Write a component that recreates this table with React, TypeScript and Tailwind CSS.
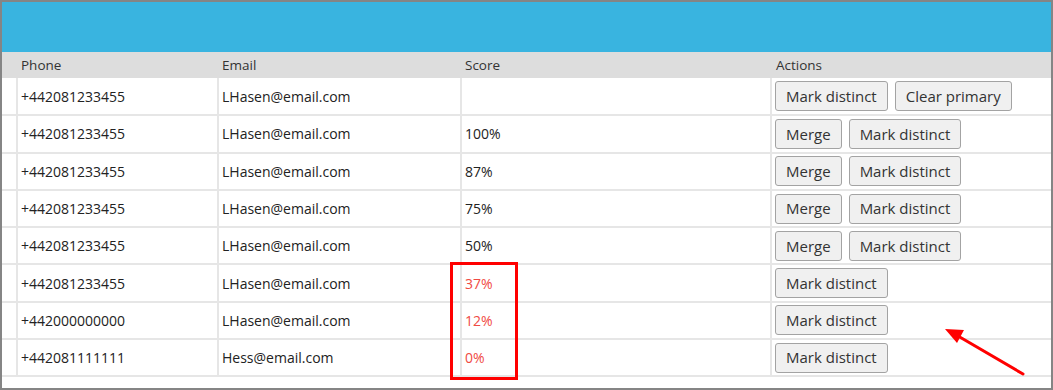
import React from "react";

type Row = { phone: string; email: string; score: string; red?: boolean; actions: string[] };

const rows: Row[] = [
  { phone: "+442081233455", email: "LHasen@email.com", score: "", actions: ["Mark distinct", "Clear primary"] },
  { phone: "+442081233455", email: "LHasen@email.com", score: "100%", actions: ["Merge", "Mark distinct"] },
  { phone: "+442081233455", email: "LHasen@email.com", score: "87%", actions: ["Merge", "Mark distinct"] },
  { phone: "+442081233455", email: "LHasen@email.com", score: "75%", actions: ["Merge", "Mark distinct"] },
  { phone: "+442081233455", email: "LHasen@email.com", score: "50%", actions: ["Merge", "Mark distinct"] },
  { phone: "+442081233455", email: "LHasen@email.com", score: "37%", red: true, actions: ["Mark distinct"] },
  { phone: "+442000000000", email: "LHasen@email.com", score: "12%", red: true, actions: ["Mark distinct"] },
  { phone: "+442081111111", email: "Hess@email.com", score: "0%", red: true, actions: ["Mark distinct"] },
];

export default function App() {
  return (
    <div
      className="relative w-[1053px] h-[390px] bg-white border-2 border-[#858585] overflow-hidden text-[#222]"
      style={{ fontFamily: '"Open Sans", "Noto Sans", sans-serif' }}
    >
      <div className="h-[50px] bg-[#39b4e0]" />
      <table className="w-full table-fixed border-collapse text-[14px]">
        <colgroup>
          <col className="w-[15px]" />
          <col className="w-[201px]" />
          <col className="w-[243px]" />
          <col className="w-[310px]" />
          <col />
        </colgroup>
        <thead>
          <tr className="h-[26px] bg-[#dddddd] text-[#333] text-[13.5px]">
            <th />
            <th className="text-left font-normal pl-[4px]">Phone</th>
            <th className="text-left font-normal pl-[4px]">Email</th>
            <th className="text-left font-normal pl-[4px]">Score</th>
            <th className="text-left font-normal pl-[5px]">Actions</th>
          </tr>
        </thead>
        <tbody>
          {rows.map((r, i) => (
            <tr key={i} className="h-[37.3px] border-b-2 border-[#e6e6e6]">
              <td className="border-r-2 border-[#e6e6e6]" />
              <td className="border-r-2 border-[#e6e6e6] pl-[3px]">{r.phone}</td>
              <td className="border-r-2 border-[#e6e6e6] pl-[3px]">{r.email}</td>
              <td className={`border-r-2 border-[#e6e6e6] pl-[3px] ${r.red ? "text-[#f04a43]" : ""}`}>{r.score}</td>
              <td className="pl-[3px]">
                <div className="flex gap-[7px]">
                  {r.actions.map((a) => (
                    <button
                      key={a}
                      className="h-[30px] px-[10px] text-[15px] text-[#333] bg-[#f0f0f0] border border-[#a3a3a3] rounded-[3px]"
                    >
                      {a}
                    </button>
                  ))}
                </div>
              </td>
            </tr>
          ))}
        </tbody>
      </table>
      <div className="absolute left-[448px] top-[260px] w-[68px] h-[118px] border-[3px] border-[#ff0000]" />
      <svg className="absolute left-0 top-0" width="1053" height="390">
        <line x1="1021" y1="372" x2="956" y2="334" stroke="#ff0000" strokeWidth="3" strokeLinecap="round" />
        <polygon points="943,327 962,328 955,341" fill="#ff0000" />
      </svg>
    </div>
  );
}
